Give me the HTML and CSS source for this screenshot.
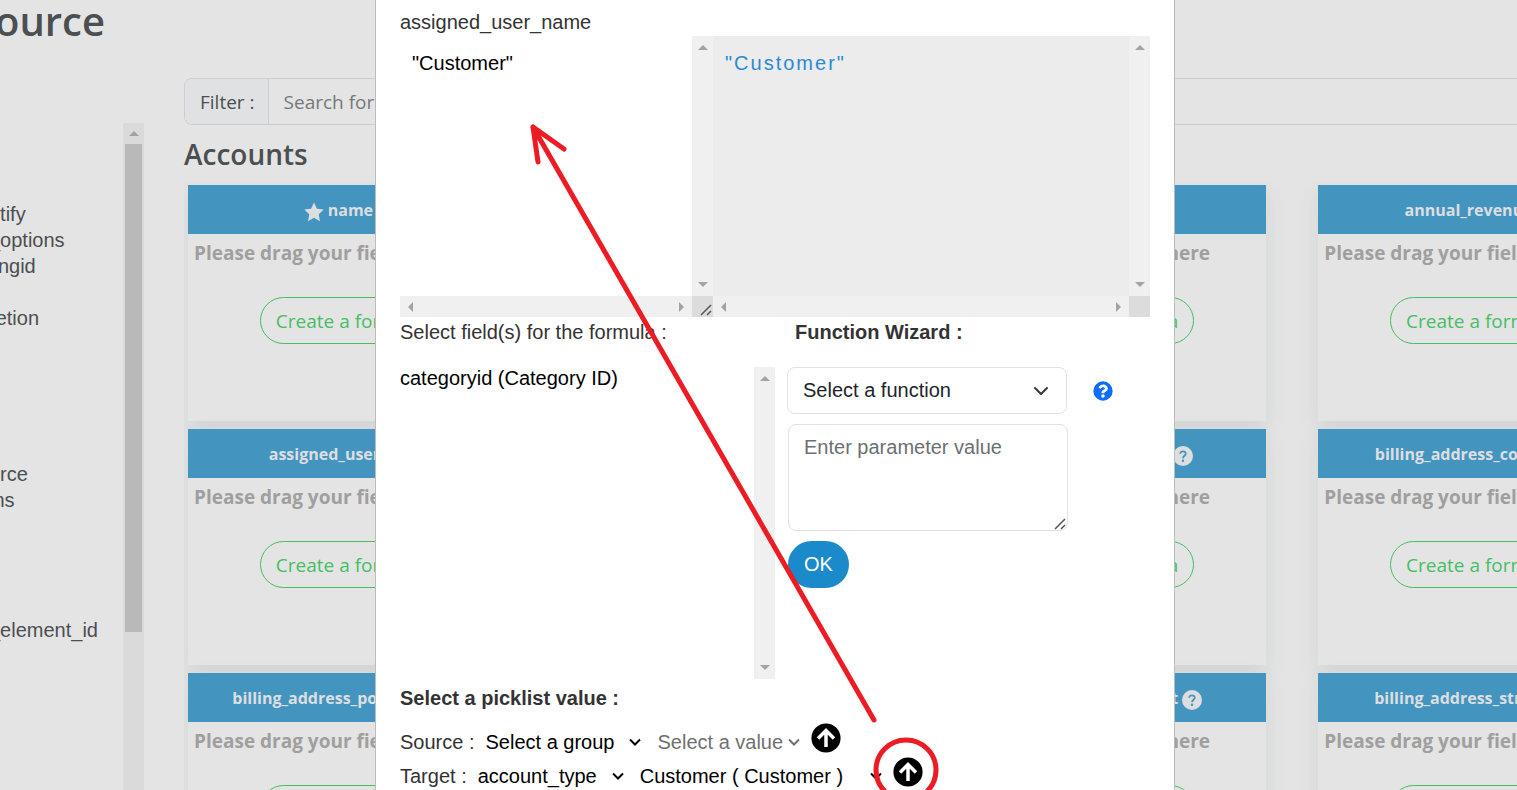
FILE: index.html
```html
<!DOCTYPE html>
<html lang="en">
<head>
<meta charset="utf-8">
<title>Field mapping</title>
<link rel="stylesheet" href="styles.css">
</head>
<body>
<svg class="defs" aria-hidden="true">
  <symbol id="help" viewBox="0 0 512 512"><path fill="currentColor" fill-rule="evenodd" d="M504 256a248 248 0 1 1-496 0a248 248 0 1 1 496 0zM262.7 90c-54.5 0-89.300 23-116.500 63.800c-3.500 5.300-2.400 12.400 2.700 16.300l34.700 26.300c5.200 3.900 12.600 3 16.700-2.100c17.900-22.700 30.100-35.800 57.300-35.800c20.400 0 45.700 13.100 45.700 33c0 15-12.400 22.700-32.500 34C247.100 238.500 216 254.900 216 296v4c0 6.600 5.400 12 12 12h56c6.600 0 12-5.400 12-12v-1.300c0-28.500 83.200-29.600 83.200-106.700c0-58-60.200-102-116.500-102zM256 338a46 46 0 1 0 0 92a46 46 0 1 0 0-92z"/></symbol>
  <symbol id="help-thin" viewBox="0 0 20 20"><circle cx="10" cy="10" r="10" fill="currentColor"/><path d="M7.200 7.800C7.200 4.400 12.900 4.500 12.800 7.800C12.700 9.800 10 9.800 10 12.200" fill="none" stroke="#4494c0" stroke-width="1.800"/><circle cx="10" cy="14.800" r="1.200" fill="#4494c0"/></symbol>
  <symbol id="star" viewBox="0 0 20 20"><path fill="currentColor" d="M10 0.500L12.900 6.700L19.700 7.600L14.700 12.300L16 19.200L10 15.800L4 19.200L5.300 12.300L0.300 7.600L7.100 6.700Z"/></symbol>
  <symbol id="up" viewBox="0 0 30 30"><circle cx="15" cy="15" r="14.600" fill="#000"/><path d="M15 24V8M7 15.500L15 7.500L23 15.500" fill="none" stroke="#fff" stroke-width="3.500"/></symbol>
  <symbol id="chevron" viewBox="0 0 12 8"><path d="M1 1.500L6 6.500L11 1.500" fill="none" stroke="currentColor" stroke-width="2"/></symbol>
  <symbol id="grip" viewBox="0 0 12 12"><path d="M1 11L11 1M7 11L11 7" fill="none" stroke="#555" stroke-width="1.500"/></symbol>
</svg>

<div class="page">
  <h1 class="page-title">Source</h1>
  <div class="columns">
    <aside class="sidebar">
      <ul class="fields">
        <li></li><li></li><li></li><li>ntify</li><li>_options</li><li>lingid</li><li></li><li>retion</li>
        <li></li><li></li><li></li><li></li><li></li><li>urce</li><li>ins</li>
        <li></li><li></li><li></li><li></li><li>_element_id</li>
      </ul>
      <div class="side-scroll"><i class="tri up"></i><div class="thumb"></div></div>
    </aside>
    <main class="main">
      <div class="filter">
        <label class="filter-label" for="filter">Filter :</label>
        <input class="filter-input" id="filter" type="text" placeholder="Search for a field">
      </div>
      <h2 class="module">Accounts</h2>
      <div class="cards">
        <section class="card"><h3 class="card-head"><svg class="ico"><use href="#star"/></svg> name <svg class="ico"><use href="#help-thin"/></svg></h3><p class="hint">Please drag your fields here</p><button class="create">Create a formula</button></section>
        <section class="card"><h3 class="card-head">account_type</h3><p class="hint">Please drag your fields here</p><button class="create">Create a formula</button></section>
        <section class="card"><h3 class="card-head">industry</h3><p class="hint">Please drag your fields here</p><button class="create">Create a formula</button></section>
        <section class="card"><h3 class="card-head">annual_revenue <svg class="ico"><use href="#help-thin"/></svg></h3><p class="hint">Please drag your fields here</p><button class="create">Create a formula</button></section>

        <section class="card"><h3 class="card-head">assigned_user_name</h3><p class="hint">Please drag your fields here</p><button class="create">Create a formula</button></section>
        <section class="card"><h3 class="card-head">assigned_user_id</h3><p class="hint">Please drag your fields here</p><button class="create">Create a formula</button></section>
        <section class="card"><h3 class="card-head">billing_address_city <svg class="ico"><use href="#help-thin"/></svg></h3><p class="hint">Please drag your fields here</p><button class="create">Create a formula</button></section>
        <section class="card"><h3 class="card-head">billing_address_country <svg class="ico"><use href="#help-thin"/></svg></h3><p class="hint">Please drag your fields here</p><button class="create">Create a formula</button></section>

        <section class="card"><h3 class="card-head">billing_address_postalcode <svg class="ico"><use href="#help-thin"/></svg></h3><p class="hint">Please drag your fields here</p><button class="create">Create a formula</button></section>
        <section class="card"><h3 class="card-head">billing_address_state</h3><p class="hint">Please drag your fields here</p><button class="create">Create a formula</button></section>
        <section class="card"><h3 class="card-head">billing_address_street <svg class="ico"><use href="#help-thin"/></svg></h3><p class="hint">Please drag your fields here</p><button class="create">Create a formula</button></section>
        <section class="card"><h3 class="card-head">billing_address_street_2 <svg class="ico"><use href="#help-thin"/></svg></h3><p class="hint">Please drag your fields here</p><button class="create">Create a formula</button></section>
      </div>
    </main>
  </div>
</div>

<div class="overlay">
  <div class="modal" role="dialog" aria-label="Formula">
    <label class="line" for="formula">assigned_user_name</label>
    <div class="editors">
      <div class="pane">
        <textarea class="code" id="formula">"Customer"</textarea>
        <div class="vbar"><i class="tri up"></i><i class="tri down"></i></div>
        <div class="hbar"><i class="tri left"></i><i class="tri right"></i></div>
        <div class="corner"><svg class="grip"><use href="#grip"/></svg></div>
      </div>
      <div class="pane preview">
        <div class="code">"Customer"</div>
        <div class="vbar"><i class="tri up"></i><i class="tri down"></i></div>
        <div class="hbar"><i class="tri left"></i><i class="tri right"></i></div>
        <div class="corner"></div>
      </div>
    </div>

    <div class="builder">
      <div class="source">
        <p class="line">Select field(s) for the formula :</p>
        <div class="list">
          <div class="option">categoryid (Category ID)</div>
          <div class="vbar"><i class="tri up"></i><i class="tri down"></i></div>
        </div>
      </div>
      <div class="wizard">
        <label class="line strong" for="function">Function Wizard :</label>
        <div class="function-row">
          <div class="select-box">
            <select class="function" id="function"><option>Select a function</option></select>
            <svg class="caret" viewBox="0 0 16 16"><path d="M2 5L8 11L14 5" fill="none" stroke="#343a40" stroke-width="2" stroke-linecap="round" stroke-linejoin="round"/></svg>
          </div>
          <svg class="help"><use href="#help"/></svg>
        </div>
        <div class="param-box">
          <textarea class="param" aria-label="Parameter value" placeholder="Enter parameter value"></textarea>
          <svg class="grip"><use href="#grip"/></svg>
        </div>
        <button class="ok">OK</button>
      </div>
    </div>

    <p class="line strong">Select a picklist value :</p>
    <div class="picks">
      <div class="pick">
        <label for="group">Source :</label>
        <div class="mini group"><select id="group"><option>Select a group</option></select><svg><use href="#chevron"/></svg></div>
        <div class="mini value muted"><select aria-label="Source value" disabled><option>Select a value</option></select><svg><use href="#chevron"/></svg></div>
        <button class="add" aria-label="Add source value"><svg><use href="#up"/></svg></button>
      </div>
      <div class="pick">
        <label for="target">Target :</label>
        <div class="mini type"><select id="target"><option>account_type</option></select><svg><use href="#chevron"/></svg></div>
        <div class="mini chosen"><select aria-label="Target value"><option>Customer ( Customer )</option></select><svg><use href="#chevron"/></svg></div>
        <button class="add" aria-label="Add target value"><svg><use href="#up"/></svg></button>
      </div>
    </div>

    <svg class="marks" aria-hidden="true"><path d="M498 720L157 127L162 162M157 127L188 149"/><circle cx="530" cy="770" r="30"/></svg>
  </div>
</div>
</body>
</html>
```
FILE: styles.css
```css
* { box-sizing: border-box; }
html, body { height: 100%; }
body {
  margin: 0;
  overflow: hidden;
  background: #e4e4e4;
  color: #4b4f52;
  font: 20px/26px "Liberation Sans", Arial, sans-serif;
}
h1, h2, h3, p, ul { margin: 0; padding: 0; }
button, input, select, textarea { font: inherit; color: inherit; margin: 0; }
.defs { display: none; }

.page { width: calc(100% + 130px); height: 100%; overflow: hidden; }
.page-title {
  margin: 0 0 36px -27px;
  font: 600 40px/42px "Open Sans", "Noto Sans", sans-serif;
}
.columns { display: flex; gap: 40px; }
.sidebar {
  display: flex;
  flex: none;
  width: 144px;
  padding-top: 45px;
}
.fields { flex: 1; list-style: none; overflow: hidden; }
.fields li { height: 26px; text-indent: -11px; white-space: nowrap; }
.side-scroll {
  width: 21px;
  padding: 8px 2px 0;
  background: #dadada;
  display: flex;
  flex-direction: column;
  align-items: center;
  gap: 8px;
}
.thumb { width: 100%; height: 488px; background: #b9b9b9; }

.tri { display: block; width: 0; height: 0; border: 5px solid transparent; }
.tri.up { border-top: 0; border-bottom-color: #a3a3a3; }
.tri.down { border-bottom: 0; border-top-color: #a3a3a3; }
.tri.left { border-left: 0; border-right-color: #a3a3a3; }
.tri.right { border-right: 0; border-left-color: #a3a3a3; }
.side-scroll .tri { flex: none; }

.main {
  flex: 1;
  min-width: 0;
  font-family: "Open Sans", "Noto Sans", sans-serif;
  font-size: 19px;
}
.filter {
  display: flex;
  height: 47px;
  border: 1px solid #c9ced2;
  border-radius: 8px;
  overflow: hidden;
}
.filter-label {
  padding: 10px 13px 10px 15px;
  background: #dfe1e3;
  border-right: 1px solid #c9ced2;
}
.filter-input { flex: 1; padding: 0 15px; border: 0; background: none; }
.filter-input::placeholder { color: #74787b; opacity: 1; }
.module { margin: 11px 0 9px; font-size: 28px; line-height: 36px; font-weight: 600; }
.cards {
  display: grid;
  grid-template-columns: repeat(4, 1fr);
  gap: 8px 52px;
  padding: 4px;
  overflow: hidden;
}
.card {
  height: 236px;
  background: #e4e4e4;
  text-align: center;
  box-shadow: 0 8px 20px rgba(60, 75, 75, 0.1);
}
.card-head {
  height: 49px;
  padding-top: 12px;
  background: #4494c0;
  color: #dcdee0;
  font-size: 16px;
  line-height: 26px;
  font-weight: 700;
  white-space: nowrap;
}
.ico { width: 20px; height: 20px; vertical-align: -6px; }
.hint {
  padding: 6px;
  color: #9f9f9f;
  font-size: 19px;
  font-weight: 700;
  text-align: left;
  white-space: nowrap;
}
.create {
  height: 47px;
  margin-top: 25px;
  padding: 0 15px;
  border: 1px solid #46be64;
  border-radius: 24px;
  background: none;
  color: #46be64;
  white-space: nowrap;
}

.overlay {
  position: fixed;
  inset: 0;
  display: flex;
  justify-content: center;
  padding-left: 33px;
}
.modal {
  position: relative;
  width: 800px;
  padding: 8px 24px;
  background: #fff;
  color: #333;
  border: solid #bcbcbc;
  border-width: 0 1px;
  overflow: hidden;
}
.line { display: block; line-height: 28px; }
.strong { font-weight: 700; }
.editors { display: grid; grid-template-columns: 313px 1fr; height: 281px; }
.pane { display: grid; grid-template: 1fr 21px / 1fr 21px; }
.code {
  display: block;
  width: 100%;
  padding: 14px 12px;
  border: 0;
  background: none;
  color: #000;
  resize: none;
  overflow: hidden;
}
.preview .code { background: #ececec; color: #2a8ad4; letter-spacing: 2px; }
.vbar, .hbar {
  display: flex;
  justify-content: space-between;
  align-items: center;
  background: #f0f0f0;
}
.vbar { flex-direction: column; width: 21px; padding: 9px 0; }
.hbar { padding: 0 8px; }
.corner { display: flex; align-items: end; justify-content: end; padding: 1px; background: #dcdcdc; }
.grip { width: 12px; height: 12px; }

.builder { display: grid; grid-template-columns: 375px 1fr; gap: 12px; height: 367px; }
.source .line, .wizard .line { margin: 1px 0 21px; }
.list { display: flex; justify-content: space-between; height: 312px; color: #000; line-height: 22px; }
.wizard > .line { padding-left: 8px; }
.function-row { display: flex; align-items: center; gap: 26px; }
.select-box { position: relative; width: 280px; height: 47px; }
.function {
  width: 100%;
  height: 100%;
  padding: 0 15px 2px;
  appearance: none;
  border: 1px solid #dee2e6;
  border-radius: 8px;
  background: #fff;
  color: #212529;
}
.caret { position: absolute; right: 18px; top: 16px; width: 16px; height: 16px; pointer-events: none; }
.help { width: 20px; height: 20px; color: #0d6efd; }
.param-box { position: relative; width: 280px; margin: 10px 1px; }
.param {
  display: block;
  width: 100%;
  height: 107px;
  padding: 9px 15px;
  border: 1px solid #dee2e6;
  border-radius: 8px;
  background: #fff;
  resize: none;
}
.param::placeholder { color: #6c6f72; opacity: 1; }
.param-box .grip { position: absolute; right: 2px; bottom: 1px; }
.ok {
  height: 47px;
  margin-left: 1px;
  padding: 0 16px 2px;
  border: 0;
  border-radius: 24px;
  background: #1b8acb;
  color: #fff;
}
.picks { padding-top: 9px; }
.pick { display: flex; align-items: center; height: 34px; white-space: nowrap; }
.pick label { padding: 8px 11px 0 0; }
.mini { display: flex; align-items: center; padding-top: 8px; color: #000; }
.mini select { flex: 1; min-width: 0; padding: 0; border: 0; appearance: none; background: none; opacity: 1; }
.mini svg { width: 12px; height: 8px; flex: none; }
.mini.muted { color: #707070; }
.group { width: 156px; margin-right: 16px; }
.value { width: 143px; margin-right: 11px; }
.type { width: 146px; margin-right: 16px; }
.chosen { width: 242px; margin-right: 11px; }
.add { width: 30px; height: 30px; padding: 0; border: 0; background: none; }
.add svg { display: block; width: 30px; height: 30px; }

.marks {
  position: absolute;
  inset: 0;
  width: 100%;
  height: 100%;
  pointer-events: none;
  fill: none;
  stroke: #ed1c24;
  stroke-width: 5;
  stroke-linecap: round;
  stroke-linejoin: round;
}
```
